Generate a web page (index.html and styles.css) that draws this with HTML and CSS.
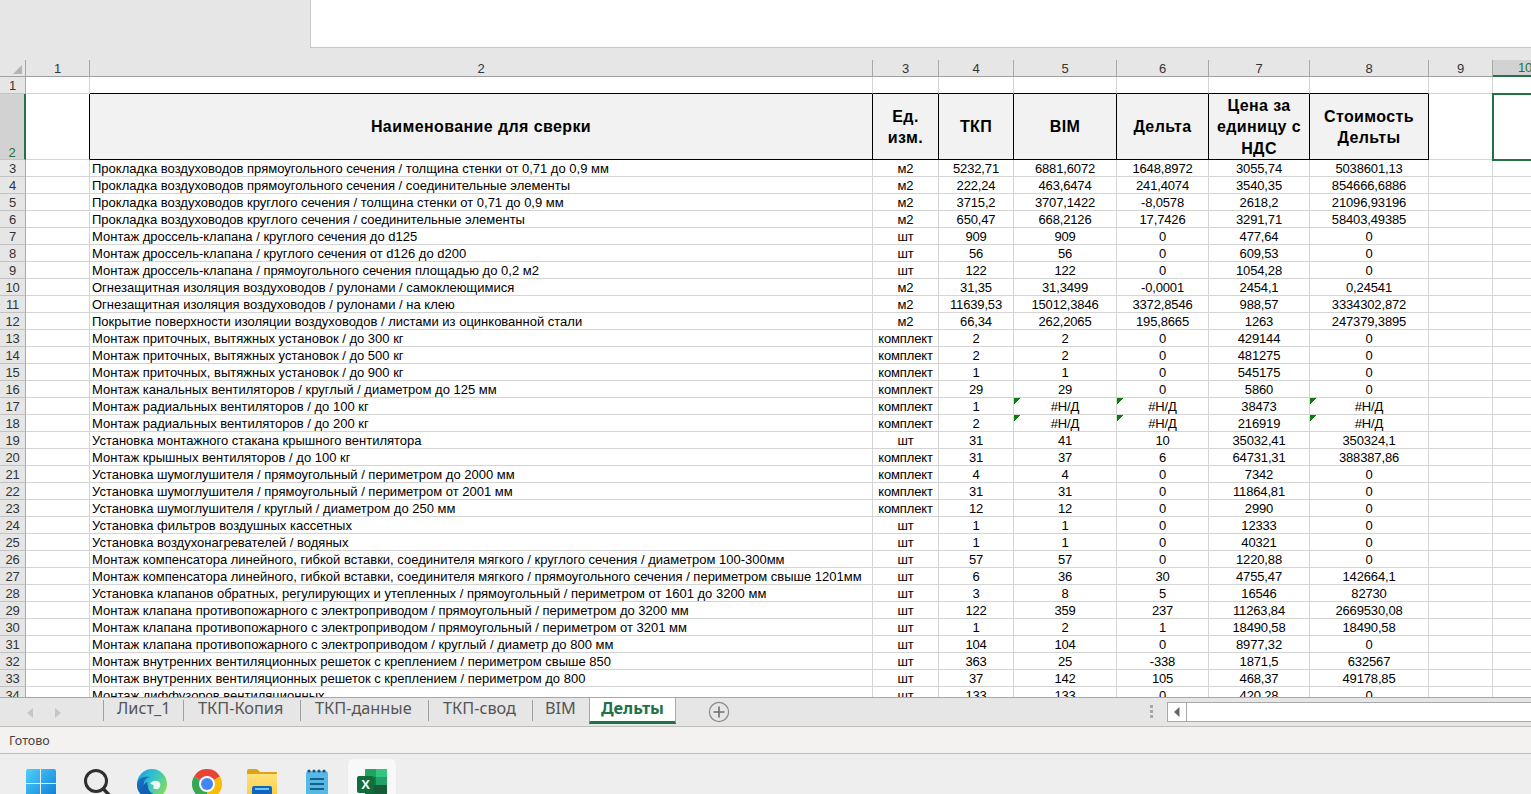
FILE: index.html
```html
<!DOCTYPE html>
<html lang="ru">
<head>
<meta charset="utf-8">
<title>Дельты</title>
<link rel="stylesheet" href="styles.css">
</head>
<body>
<div class="app">
  <div class="ribbon"><div class="formula"></div></div>
  <div class="sheet">
    <table class="grid">
      <colgroup>
        <col class="w-rh"><col class="w-1"><col class="w-2"><col class="w-3"><col class="w-4"><col class="w-5"><col class="w-6"><col class="w-7"><col class="w-8"><col class="w-9"><col class="w-10">
      </colgroup>
      <thead>
        <tr class="colhead">
          <th class="corner"><span class="corner-mark"></span></th><th>1</th><th>2</th><th>3</th><th>4</th><th>5</th><th>6</th><th>7</th><th>8</th><th>9</th><th class="colsel">10</th>
        </tr>
      </thead>
      <tbody>
        <tr><th class="rh">1</th><td></td><td class="topb"></td><td class="topb"></td><td class="topb"></td><td class="topb"></td><td class="topb"></td><td class="topb"></td><td class="topb"></td><td></td><td></td></tr>
        <tr class="title">
          <th class="rh rowsel">2</th><td class="rb"></td>
          <td class="hd">Наименование для сверки</td><td class="hd">Ед. изм.</td><td class="hd">ТКП</td><td class="hd">BIM</td><td class="hd">Дельта</td><td class="hd">Цена за единицу с НДС</td><td class="hd">Стоимость Дельты</td>
          <td></td><td class="cursor"></td>
        </tr>
        <tr><th class="rh">3</th><td></td><td class="n">Прокладка воздуховодов прямоугольного сечения / толщина стенки от 0,71 до 0,9 мм</td><td>м2</td><td>5232,71</td><td>6881,6072</td><td>1648,8972</td><td>3055,74</td><td>5038601,13</td><td></td><td></td></tr>
        <tr><th class="rh">4</th><td></td><td class="n">Прокладка воздуховодов прямоугольного сечения / соединительные элементы</td><td>м2</td><td>222,24</td><td>463,6474</td><td>241,4074</td><td>3540,35</td><td>854666,6886</td><td></td><td></td></tr>
        <tr><th class="rh">5</th><td></td><td class="n">Прокладка воздуховодов круглого сечения / толщина стенки от 0,71 до 0,9 мм</td><td>м2</td><td>3715,2</td><td>3707,1422</td><td>-8,0578</td><td>2618,2</td><td>21096,93196</td><td></td><td></td></tr>
        <tr><th class="rh">6</th><td></td><td class="n">Прокладка воздуховодов круглого сечения / соединительные элементы</td><td>м2</td><td>650,47</td><td>668,2126</td><td>17,7426</td><td>3291,71</td><td>58403,49385</td><td></td><td></td></tr>
        <tr><th class="rh">7</th><td></td><td class="n">Монтаж дроссель-клапана / круглого сечения до d125</td><td>шт</td><td>909</td><td>909</td><td>0</td><td>477,64</td><td>0</td><td></td><td></td></tr>
        <tr><th class="rh">8</th><td></td><td class="n">Монтаж дроссель-клапана / круглого сечения от d126 до d200</td><td>шт</td><td>56</td><td>56</td><td>0</td><td>609,53</td><td>0</td><td></td><td></td></tr>
        <tr><th class="rh">9</th><td></td><td class="n">Монтаж дроссель-клапана / прямоугольного сечения площадью до 0,2 м2</td><td>шт</td><td>122</td><td>122</td><td>0</td><td>1054,28</td><td>0</td><td></td><td></td></tr>
        <tr><th class="rh">10</th><td></td><td class="n">Огнезащитная изоляция воздуховодов / рулонами / самоклеющимися</td><td>м2</td><td>31,35</td><td>31,3499</td><td>-0,0001</td><td>2454,1</td><td>0,24541</td><td></td><td></td></tr>
        <tr><th class="rh">11</th><td></td><td class="n">Огнезащитная изоляция воздуховодов / рулонами / на клею</td><td>м2</td><td>11639,53</td><td>15012,3846</td><td>3372,8546</td><td>988,57</td><td>3334302,872</td><td></td><td></td></tr>
        <tr><th class="rh">12</th><td></td><td class="n">Покрытие поверхности изоляции воздуховодов / листами из оцинкованной стали</td><td>м2</td><td>66,34</td><td>262,2065</td><td>195,8665</td><td>1263</td><td>247379,3895</td><td></td><td></td></tr>
        <tr><th class="rh">13</th><td></td><td class="n">Монтаж приточных, вытяжных установок / до 300 кг</td><td>комплект</td><td>2</td><td>2</td><td>0</td><td>429144</td><td>0</td><td></td><td></td></tr>
        <tr><th class="rh">14</th><td></td><td class="n">Монтаж приточных, вытяжных установок / до 500 кг</td><td>комплект</td><td>2</td><td>2</td><td>0</td><td>481275</td><td>0</td><td></td><td></td></tr>
        <tr><th class="rh">15</th><td></td><td class="n">Монтаж приточных, вытяжных установок / до 900 кг</td><td>комплект</td><td>1</td><td>1</td><td>0</td><td>545175</td><td>0</td><td></td><td></td></tr>
        <tr><th class="rh">16</th><td></td><td class="n">Монтаж канальных вентиляторов / круглый / диаметром до 125 мм</td><td>комплект</td><td>29</td><td>29</td><td>0</td><td>5860</td><td>0</td><td></td><td></td></tr>
        <tr><th class="rh">17</th><td></td><td class="n">Монтаж радиальных вентиляторов / до 100 кг</td><td>комплект</td><td>1</td><td class="err">#Н/Д</td><td class="err">#Н/Д</td><td>38473</td><td class="err">#Н/Д</td><td></td><td></td></tr>
        <tr><th class="rh">18</th><td></td><td class="n">Монтаж радиальных вентиляторов / до 200 кг</td><td>комплект</td><td>2</td><td class="err">#Н/Д</td><td class="err">#Н/Д</td><td>216919</td><td class="err">#Н/Д</td><td></td><td></td></tr>
        <tr><th class="rh">19</th><td></td><td class="n">Установка монтажного стакана крышного вентилятора</td><td>шт</td><td>31</td><td>41</td><td>10</td><td>35032,41</td><td>350324,1</td><td></td><td></td></tr>
        <tr><th class="rh">20</th><td></td><td class="n">Монтаж крышных вентиляторов / до 100 кг</td><td>комплект</td><td>31</td><td>37</td><td>6</td><td>64731,31</td><td>388387,86</td><td></td><td></td></tr>
        <tr><th class="rh">21</th><td></td><td class="n">Установка шумоглушителя / прямоугольный / периметром до 2000 мм</td><td>комплект</td><td>4</td><td>4</td><td>0</td><td>7342</td><td>0</td><td></td><td></td></tr>
        <tr><th class="rh">22</th><td></td><td class="n">Установка шумоглушителя / прямоугольный / периметром от 2001 мм</td><td>комплект</td><td>31</td><td>31</td><td>0</td><td>11864,81</td><td>0</td><td></td><td></td></tr>
        <tr><th class="rh">23</th><td></td><td class="n">Установка шумоглушителя / круглый / диаметром до 250 мм</td><td>комплект</td><td>12</td><td>12</td><td>0</td><td>2990</td><td>0</td><td></td><td></td></tr>
        <tr><th class="rh">24</th><td></td><td class="n">Установка фильтров воздушных кассетных</td><td>шт</td><td>1</td><td>1</td><td>0</td><td>12333</td><td>0</td><td></td><td></td></tr>
        <tr><th class="rh">25</th><td></td><td class="n">Установка воздухонагревателей / водяных</td><td>шт</td><td>1</td><td>1</td><td>0</td><td>40321</td><td>0</td><td></td><td></td></tr>
        <tr><th class="rh">26</th><td></td><td class="n">Монтаж компенсатора линейного, гибкой вставки, соединителя мягкого / круглого сечения / диаметром 100-300мм</td><td>шт</td><td>57</td><td>57</td><td>0</td><td>1220,88</td><td>0</td><td></td><td></td></tr>
        <tr><th class="rh">27</th><td></td><td class="n">Монтаж компенсатора линейного, гибкой вставки, соединителя мягкого / прямоугольного сечения / периметром свыше 1201мм</td><td>шт</td><td>6</td><td>36</td><td>30</td><td>4755,47</td><td>142664,1</td><td></td><td></td></tr>
        <tr><th class="rh">28</th><td></td><td class="n">Установка клапанов обратных, регулирующих и утепленных / прямоугольный / периметром от 1601 до 3200 мм</td><td>шт</td><td>3</td><td>8</td><td>5</td><td>16546</td><td>82730</td><td></td><td></td></tr>
        <tr><th class="rh">29</th><td></td><td class="n">Монтаж клапана противопожарного с электроприводом / прямоугольный / периметром до 3200 мм</td><td>шт</td><td>122</td><td>359</td><td>237</td><td>11263,84</td><td>2669530,08</td><td></td><td></td></tr>
        <tr><th class="rh">30</th><td></td><td class="n">Монтаж клапана противопожарного с электроприводом / прямоугольный / периметром от 3201 мм</td><td>шт</td><td>1</td><td>2</td><td>1</td><td>18490,58</td><td>18490,58</td><td></td><td></td></tr>
        <tr><th class="rh">31</th><td></td><td class="n">Монтаж клапана противопожарного с электроприводом / круглый / диаметр до 800 мм</td><td>шт</td><td>104</td><td>104</td><td>0</td><td>8977,32</td><td>0</td><td></td><td></td></tr>
        <tr><th class="rh">32</th><td></td><td class="n">Монтаж внутренних вентиляционных решеток с креплением / периметром свыше 850</td><td>шт</td><td>363</td><td>25</td><td>-338</td><td>1871,5</td><td>632567</td><td></td><td></td></tr>
        <tr><th class="rh">33</th><td></td><td class="n">Монтаж внутренних вентиляционных решеток с креплением / периметром до 800</td><td>шт</td><td>37</td><td>142</td><td>105</td><td>468,37</td><td>49178,85</td><td></td><td></td></tr>
        <tr><th class="rh">34</th><td></td><td class="n">Монтаж диффузоров вентиляционных</td><td>шт</td><td>133</td><td>133</td><td>0</td><td>420,28</td><td>0</td><td></td><td></td></tr>
      </tbody>
    </table>
  </div>
  <div class="tabbar">
    <div class="tabnav">
      <svg class="nav-ic" width="8" height="12" viewBox="0 0 8 12"><path d="M7 1 1 6l6 5z"/></svg>
      <svg class="nav-ic" width="8" height="12" viewBox="0 0 8 12"><path d="M1 1l6 5-6 5z"/></svg>
    </div>
    <div class="tab t1">Лист_1</div>
    <div class="tab t2">ТКП-Копия</div>
    <div class="tab t3">ТКП-данные</div>
    <div class="tab t4">ТКП-свод</div>
    <div class="tab t5">BIM</div>
    <div class="tab active">Дельты</div>
    <svg class="addtab" width="22" height="22" viewBox="0 0 22 22"><circle cx="11" cy="11" r="9.6" fill="none" stroke="#8a8a8a" stroke-width="1.2"/><path d="M11 5.500v11M5.500 11h11" stroke="#6f6f6f" stroke-width="1.6"/></svg>
    <div class="hscroll-wrap">
      <div class="dots"><span></span><span></span><span></span></div>
      <div class="hscroll">
        <div class="hs-btn"><svg width="6" height="10" viewBox="0 0 6 10"><path d="M5.500 0v10L0 5z" fill="#666"/></svg></div>
      </div>
    </div>
  </div>
  <div class="status">Готово</div>
  <div class="taskbar">
    <div class="task">
      <svg class="win" width="30" height="30" viewBox="0 0 30 30"><defs><linearGradient id="w1" x1="0" y1="0" x2="1" y2="1"><stop offset="0" stop-color="#4fd0fb"/><stop offset="1" stop-color="#0a7bd6"/></linearGradient></defs><path d="M0 2a2 2 0 0 1 2-2h12v14H0zM15 0h13a2 2 0 0 1 2 2v12H15zM0 15h14v15H2a2 2 0 0 1-2-2zM15 15h15v13a2 2 0 0 1-2 2H15z" fill="url(#w1)"/></svg>
    </div>
    <div class="task">
      <svg width="30" height="30" viewBox="0 0 30 30"><circle cx="14" cy="12" r="10.500" fill="none" stroke="#2f2f2f" stroke-width="3"/><path d="M21.500 20 29 28" stroke="#2f2f2f" stroke-width="3.400" stroke-linecap="round"/></svg>
    </div>
    <div class="task">
      <svg width="30" height="30" viewBox="0 0 30 30"><defs><linearGradient id="e1" x1="0" y1="0" x2="1" y2=".6"><stop offset="0" stop-color="#1b9de2"/><stop offset=".55" stop-color="#36c4c8"/><stop offset="1" stop-color="#7fdc5f"/></linearGradient><linearGradient id="e2" x1="0" y1="0" x2="1" y2="1"><stop offset="0" stop-color="#1a74c6"/><stop offset="1" stop-color="#0b4f9e"/></linearGradient></defs><circle cx="15" cy="15" r="15" fill="url(#e1)"/><path d="M0 16C0 9 7 7 13 8c-5 1-7 5-6 10 1 7 8 12 16 11-3 1-5 2-8 1C7 30 0 24 0 16z" fill="url(#e2)"/><path d="M11 17c0 6 5 9 11 9-2 3-7 4-12 2-4-2-5-8-3-12 1-2 2-3 4-3-1 1-1 2 0 4z" fill="#0f62b2"/><path d="M13 15c2-4 8-4 10-1 1 2 0 5-2 6-2 .5-4 0-5-1 1-1 1-2 0-3-1-1-2-1-3-1z" fill="#eef6f8"/></svg>
    </div>
    <div class="task">
      <svg width="30" height="30" viewBox="0 0 30 30"><path d="M15 15 2 7.500A15 15 0 0 1 28 7.500z" fill="#ea4335"/><path d="M15 15 28 7.500A15 15 0 0 1 15 30z" fill="#fbbc04"/><path d="M15 15 15 30A15 15 0 0 1 2 7.500z" fill="#34a853"/><circle cx="15" cy="15" r="8" fill="#fff"/><circle cx="15" cy="15" r="6" fill="#4285f4"/></svg>
    </div>
    <div class="task">
      <svg width="30" height="30" viewBox="0 0 30 30"><defs><linearGradient id="f1" x1="0" y1="0" x2="0" y2="1"><stop offset="0" stop-color="#ffe27a"/><stop offset="1" stop-color="#fcc93e"/></linearGradient></defs><path d="M0 2a2 2 0 0 1 2-2h7c2 0 3 2 4 3h17v27H0z" fill="#dfa316"/><path d="M0 5h30v25H0z" fill="url(#f1)"/><rect x="5" y="17" width="20" height="13" rx="2" fill="#0c68bf"/><rect x="8" y="19" width="14" height="2" fill="#7cc0ef"/></svg>
    </div>
    <div class="task">
      <svg width="30" height="30" viewBox="0 0 30 30"><rect x="4" y="2" width="22" height="28" rx="3" fill="#55b9e4"/><g fill="#13587f"><circle cx="7" cy="2" r="1.600"/><circle cx="12" cy="2" r="1.600"/><circle cx="17" cy="2" r="1.600"/><circle cx="22" cy="2" r="1.600"/></g><path d="M8 10h14M8 15h14M8 20h14" stroke="#155f88" stroke-width="1.800"/></svg>
    </div>
    <div class="task current">
      <svg width="30" height="30" viewBox="0 0 30 30"><path d="M8 1a1 1 0 0 1 1-1h10v8H8z" fill="#21a366"/><rect x="19" y="0" width="11" height="8" fill="#33c481"/><rect x="8" y="8" width="11" height="8" fill="#107c41"/><rect x="19" y="8" width="11" height="8" fill="#21a366"/><rect x="8" y="16" width="22" height="14" fill="#185c37"/><rect x="0" y="7" width="17" height="17" rx="2" fill="#0f6f3b"/><text class="xl" x="8.500" y="20">X</text></svg>
    </div>
  </div>
</div>
</body>
</html>
```
FILE: styles.css
```css
* { box-sizing: border-box; }
html, body { margin: 0; padding: 0; width: 100%; height: 100%; overflow: hidden; }
body { font-family: "Liberation Sans", Arial, sans-serif; background: #e6e6e6; color: #000; }
.app { display: flex; flex-direction: column; width: 1531px; height: 794px; overflow: hidden; }

.ribbon { height: 60px; flex: none; background: #e6e6e6; }
.formula { height: 48px; margin-left: 310px; background: #fff; border-left: 1px solid #c8c8c8; border-bottom: 1px solid #c8c8c8; }

.sheet { height: 637px; flex: none; overflow: hidden; background: #fff; }
.grid { border-collapse: separate; border-spacing: 0; table-layout: fixed; width: 1557px; font-size: 13px; }
.w-rh { width: 26px; } .w-1 { width: 64px; } .w-2 { width: 783px; } .w-3 { width: 66px; }
.w-4 { width: 75px; } .w-5 { width: 103px; } .w-6 { width: 92px; } .w-7 { width: 101px; }
.w-8 { width: 119px; } .w-9 { width: 64px; } .w-10 { width: 64px; }

.grid tr { height: 17px; }
.grid td, .grid th { height: 17px; padding: 0 2px; font-weight: 400; line-height: 15px; text-align: center; white-space: nowrap; overflow: hidden; border-right: 1px solid #d4d4d4; border-bottom: 1px solid #d4d4d4; letter-spacing: -.15px; }
.grid td.n { text-align: left; letter-spacing: 0; }
.colhead th { background: #e6e6e6; color: #333; border-right-color: #a8a8a8; border-bottom-color: #a0a0a0; }
.colhead .colsel { background: #d2d2d2; color: #217346; border-right: 0; border-bottom: 2px solid #217346; }
.corner { text-align: right; vertical-align: bottom; }
.corner-mark { display: block; width: 9px; height: 9px; margin: 0 1px 2px auto; background: #b4b4b4; clip-path: polygon(100% 0, 100% 100%, 0 100%); }
.grid th.rh { background: #e6e6e6; color: #333; border-right-color: #a8a8a8; border-bottom-color: #c2c2c2; }
.grid th.rowsel { background: #d2d2d2; color: #217346; vertical-align: bottom; line-height: 13px; border-right: 2px solid #217346; }

.grid td.topb { border-bottom-color: #000; }
.title, .grid .title td, .grid .title th { height: 66px; }
.grid td.rb { border-right-color: #000; }
.grid td.hd { background: #f2f2f2; border-right-color: #000; border-bottom-color: #000; font-size: 16px; font-weight: 700; line-height: 21.200px; white-space: normal; padding: 1px 3px 0; letter-spacing: .4px; }
.grid td.cursor { outline: 2px solid #217346; outline-offset: -1px; }
.grid td.err { background: linear-gradient(135deg, #0a7d0a 4.500px, transparent 4.500px) no-repeat 0 0 / 7px 7px; }

.tabbar { height: 30px; flex: none; display: flex; align-items: flex-start; background: #e6e6e6; border-top: 1px solid #a8a8a8; border-bottom: 1px solid #bdbdbd; font-family: "Noto Sans", "Open Sans", sans-serif; font-size: 16.3px; color: #555; }
.tabnav { width: 103px; flex: none; display: flex; gap: 20px; padding: 9px 0 0 26px; }
.nav-ic { fill: #c6c6c6; }
.tab { height: 21px; margin-top: 2px; padding-left: 14px; line-height: 17px; border-left: 1px solid #a0a0a0; white-space: nowrap; flex: none; overflow: visible; }
.t1 { width: 80px; padding-left: 13px; } .t2 { width: 117px; } .t3 { width: 128px; } .t4 { width: 104px; } .t5 { width: 57px; padding-left: 12px; }
.tab.active { width: 87px; height: 26px; margin-top: 0; padding: 2px 0 0; text-align: center; background: #fff; color: #217346; font-weight: 700; border-left: 1px solid #a8a8a8; border-right: 1px solid #a8a8a8; border-bottom: 3px solid #217346; }
.addtab { margin: 3px 0 0 32px; flex: none; }
.hscroll-wrap { margin-left: auto; display: flex; align-items: flex-start; }
.dots { display: flex; flex-direction: column; gap: 2px; margin: 7px 14px 0 0; }
.dots span { display: block; width: 3px; height: 3px; background: #a8a8a8; }
.hscroll { width: 364px; height: 20px; margin-top: 4px; background: #fff; border: 1px solid #a8a8a8; border-right: 0; }
.hs-btn { width: 19px; height: 18px; display: flex; align-items: center; justify-content: center; border-right: 1px solid #a8a8a8; }

.status { height: 27px; flex: none; padding-left: 9px; background: #f3f2f1; border-bottom: 1px solid #bdbdbd; font-family: "Noto Sans", "Open Sans", sans-serif; font-size: 12.500px; line-height: 27px; color: #444; }

.taskbar { height: 40px; flex: none; display: flex; gap: 7px; padding: 5px 0 0 18px; background: #eeeeee; overflow: hidden; }
.task { width: 48px; height: 40px; flex: none; padding-top: 10px; display: flex; justify-content: center; align-items: flex-start; border-radius: 5px 5px 0 0; }
.win { margin-right: 2px; }
.task.current { background: #f8f8f8; box-shadow: 0 0 0 1px #ececec; }
.xl { fill: #fff; font-size: 13px; font-weight: 700; text-anchor: middle; font-family: "Liberation Sans", sans-serif; }
```
